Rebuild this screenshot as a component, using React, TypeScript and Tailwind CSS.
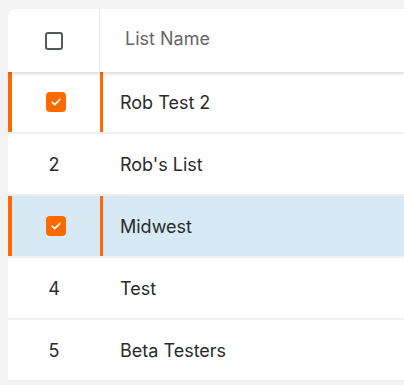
const lists = [
  { id: 1, name: "Rob Test 2", selected: true, active: false },
  { id: 2, name: "Rob's List", selected: false, active: false },
  { id: 3, name: "Midwest", selected: true, active: true },
  { id: 4, name: "Test", selected: false, active: false },
  { id: 5, name: "Beta Testers", selected: false, active: false },
];

function CheckMark() {
  return (
    <span className="flex h-5 w-5 items-center justify-center rounded-[4px] bg-[#ff6a00]">
      <svg width="12" height="12" viewBox="0 0 12 12" fill="none">
        <path
          d="M2.2 6.3 4.8 8.7 9.8 3.5"
          stroke="white"
          strokeWidth="1.8"
          strokeLinecap="round"
          strokeLinejoin="round"
        />
      </svg>
    </span>
  );
}

export default function App() {
  return (
    <main
      className="min-h-screen bg-[#f3f3f3] pl-2 pt-[9px]"
      style={{ fontFamily: "Inter, 'Noto Sans', sans-serif" }}
    >
      <div className="overflow-hidden rounded-tl-lg bg-white">
        <div className="relative z-10 flex h-[63px] items-center bg-white shadow-[0_2px_3px_rgba(0,0,0,0.14)]">
          <div className="flex h-full w-[92px] items-center justify-center border-r border-[#e8e8e8]">
            <span className="block h-[18px] w-[18px] rounded-[3px] border-2 border-[#55595c]" />
          </div>
          <span className="-mt-1 pl-[25px] text-[18px] text-[#666]">List Name</span>
        </div>

        {lists.map((item) => (
          <div
            key={item.id}
            className={`flex h-[62px] items-center border-b-2 border-[#efefef] ${
              item.active ? "bg-[#d6e9f4]" : "bg-white"
            }`}
          >
            <div
              className={`flex h-full w-[95px] items-center justify-center ${
                item.selected
                  ? "border-l-4 border-r-[3px] border-[#ff6a00] pr-[1px]"
                  : "pr-[3px]"
              }`}
            >
              {item.selected ? (
                <CheckMark />
              ) : (
                <span className="text-[18px] text-[#2a2a2a]">{item.id}</span>
              )}
            </div>
            <span className="pl-[17px] text-[18px] text-[#2a2a2a]">{item.name}</span>
          </div>
        ))}
      </div>
    </main>
  );
}
